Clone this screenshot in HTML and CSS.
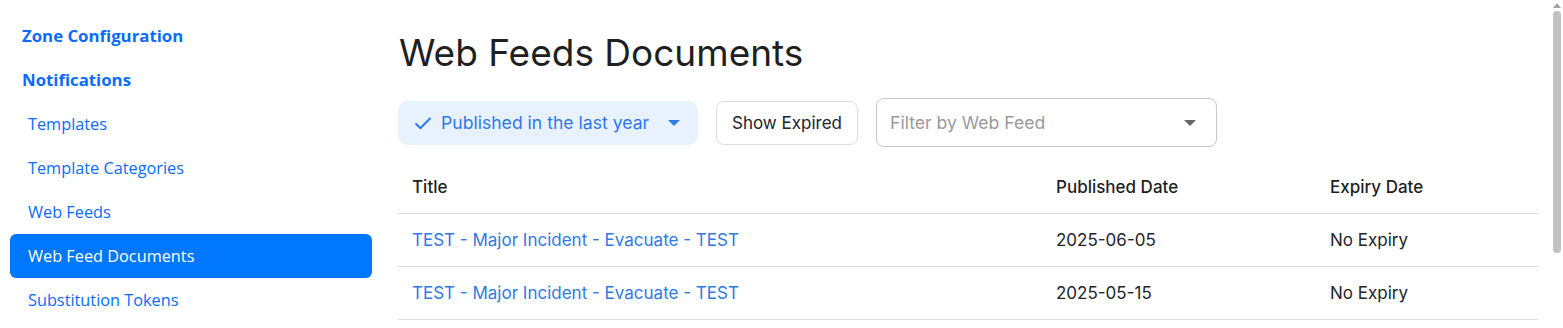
FILE: index.html
```html
<!DOCTYPE html>
<html lang="en">

<head>
    <meta charset="UTF-8">
    <meta name="viewport" content="width=device-width, initial-scale=1.0">
    <title>Web Feeds Documents</title>
    <link rel="stylesheet" href="styles.css">
</head>

<body>
<div id="page">
    <div id="sidebar">
        <a class="nav-head" href="#">Zone Configuration</a>
        <a class="nav-head" href="#">Notifications</a>
        <a class="nav-item" href="#">Templates</a>
        <a class="nav-item" href="#">Template Categories</a>
        <a class="nav-item" href="#">Web Feeds</a>
        <a class="nav-item active" href="#">Web Feed Documents</a>
        <a class="nav-item" href="#">Substitution Tokens</a>
    </div>

    <div id="main">
        <h1 id="title">Web Feeds Documents</h1>

        <div class="filters">
            <button class="pill">
                <svg class="check" width="18" height="14" viewBox="0 0 18 14"><path d="M1.5 7.5 L6.5 12 L16.5 2" fill="none" stroke="currentColor" stroke-width="2"/></svg>
                Published in the last year
                <span class="caret blue"></span>
            </button>
            <button class="btn-outline">Show Expired</button>
            <div class="select">
                <span class="placeholder">Filter by Web Feed</span>
                <span class="caret grey"></span>
            </div>
        </div>

        <table class="docs">
            <thead>
            <tr>
                <th class="col-title">Title</th>
                <th class="col-pub">Published Date</th>
                <th>Expiry Date</th>
            </tr>
            </thead>
            <tbody>
            <tr>
                <td><a href="#">TEST - Major Incident - Evacuate - TEST</a></td>
                <td>2025-06-05</td>
                <td>No Expiry</td>
            </tr>
            <tr>
                <td><a href="#">TEST - Major Incident - Evacuate - TEST</a></td>
                <td>2025-05-15</td>
                <td>No Expiry</td>
            </tr>
            </tbody>
        </table>
    </div>
</div>

<div class="scrollbar">
    <div class="sb-arrow"></div>
    <div class="sb-thumb"></div>
</div>
</body>

</html>
```

FILE: styles.css
```css
body {
    margin: 0;
    background: #fff;
    font-family: "Inter", "Noto Sans", sans-serif;
    color: #212529;
}
#page {
    display: flex;
    align-items: flex-start;
}

/* sidebar */
#sidebar {
    width: 362px;
    margin-left: 10px;
    padding-top: 14px;
    display: flex;
    flex-direction: column;
    font-family: "Open Sans", "Noto Sans", sans-serif;
}
#sidebar a {
    display: block;
    height: 44px;
    line-height: 44px;
    text-decoration: none;
    color: #0a6cff;
    font-size: 16.3px;
    border-radius: 6px;
}
.nav-head {
    padding-left: 12px;
    font-weight: 700;
    font-size: 16.8px !important;
}
.nav-item {
    padding-left: 18px;
}
#sidebar a.active {
    background-color: #0077ff;
    color: #fff;
}

/* main */
#main {
    width: 1140px;
    margin-left: 26px;
}
#title {
    margin: 31px 0 24px 1px;
    font-size: 37px;
    line-height: 43px;
    font-weight: 400;
    color: #1f1f1f;
}
.filters {
    display: flex;
    align-items: center;
    gap: 18px;
}
.filters button {
    font-family: inherit;
    font-size: 17px;
    height: 44px;
    cursor: pointer;
}
.pill {
    display: flex;
    align-items: center;
    gap: 9px;
    width: 300px;
    padding: 0 18px 0 16px;
    background-color: #e8f1fe;
    border: none;
    border-radius: 10px;
    color: #2f7ae5;
    font-size: 17.6px !important;
}
.check {
    color: #2f7ae5;
}
.caret {
    width: 0;
    height: 0;
    border-left: 6px solid transparent;
    border-right: 6px solid transparent;
    border-top: 6px solid #2f7ae5;
    margin-left: auto;
}
.caret.grey {
    border-top-color: #666;
}
.btn-outline {
    width: 142px;
    background: #fff;
    border: 1px solid #ddd;
    border-radius: 8px;
    color: #212529;
}
.select {
    display: flex;
    align-items: center;
    width: 341px;
    height: 49px;
    box-sizing: border-box;
    padding: 0 20px 0 13px;
    border: 1px solid #c8c8c8;
    border-radius: 8px;
}
.placeholder {
    color: #9a9a9a;
    font-size: 17.6px;
}

/* table */
.docs {
    width: 100%;
    margin-top: 14px;
    border-collapse: collapse;
    font-size: 17px;
}
.docs th {
    text-align: left;
    font-weight: 500;
    color: #1f1f1f;
}
.docs th,
.docs td {
    height: 52px;
    padding: 0 14px;
    border-bottom: 1px solid #dedede;
}
.col-title {
    width: 616px;
}
.col-pub {
    width: 246px;
}
.docs td a {
    color: #2f7ae5;
    text-decoration: none;
}

/* fake page scrollbar */
.scrollbar {
    position: fixed;
    top: 0;
    right: 2px;
    width: 8px;
}
.sb-arrow {
    width: 0;
    height: 0;
    margin: 3px auto 0;
    border-left: 4px solid transparent;
    border-right: 4px solid transparent;
    border-bottom: 5px solid #a3a3a3;
}
.sb-thumb {
    height: 242px;
    margin-top: 3px;
    background: #c1c1c1;
    border-radius: 4px;
}
```
